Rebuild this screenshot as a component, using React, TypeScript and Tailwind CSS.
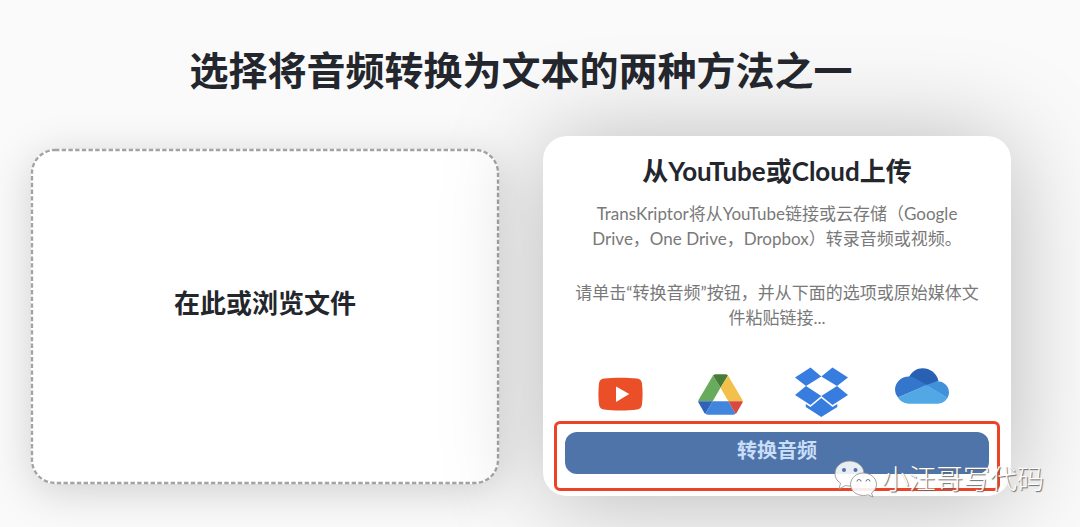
import React from 'react';

const YouTubeLogo: React.FC = () => (
  <svg viewBox="0 0 45 34" className="w-[45px] h-[34px] mt-[10px]" role="img" aria-label="YouTube">
    <path
      d="M6 1.6C16 .3 29 .3 39 1.6c3 .4 4.6 2 5 5 .8 6.800.8 14 0 20.800-.4 3-2 4.600-5 5-10 1.300-23 1.300-33 0-3-.4-4.600-2-5-5C.2 20.600.2 13.400 1 6.600c.4-3 2-4.600 5-5Z"
      fill="#ea4f27"
    />
    <path d="M18 9.500 31.300 17 18 25Z" fill="#fff" />
  </svg>
);

const DriveLogo: React.FC = () => (
  <svg viewBox="0 0 45 41" className="w-[45px] h-[41px] mt-[7px]" role="img" aria-label="Google Drive">
    <path d="M15 1.500 .8 25.500Q0 27 .3 27.300H14.700L22.500 13.800Z" fill="#68ab5c" />
    <path d="M15 1.500Q16 .3 18 .3H27Q29 .3 30 1.500L22.500 13.800Z" fill="#477b38" />
    <path d="M30 1.500 44.200 25.500Q45 27 44.700 27.300H30.300L22.500 13.800Z" fill="#f2c14b" />
    <path d="M.3 27.300H14.700L7.400 39.700Q6.500 39.200 6 38.200L1 29.500Q.3 28.500 .3 27.300Z" fill="#2f62bb" />
    <path d="M14.700 27.300H30.300L37.600 39.700Q36.500 40.700 34.500 40.700H10.500Q8.500 40.700 7.400 39.700Z" fill="#4285dd" />
    <path d="M30.300 27.300H44.700Q44.700 28.500 44 29.500L39 38.200Q38.500 39.200 37.600 39.700Z" fill="#d84a3f" />
  </svg>
);

const DropboxLogo: React.FC = () => (
  <svg viewBox="0 0 53 50" className="w-[53px] h-[50px]" role="img" aria-label="Dropbox">
    <g fill="#377de0">
      <path d="M15.500 .5 26.300 9.400 11 19 0 10.500Z" />
      <path d="M37.500 .5 53 10.500 42 19 26.300 9.400Z" />
      <path d="M11 19 26.300 29 15.500 38 0 28Z" />
      <path d="M42 19 53 28 37.500 38 26.300 29Z" />
      <path d="M26.300 31 37.500 40 42.300 37V40L26.300 50 10.800 40V37L15.500 40Z" />
    </g>
  </svg>
);

const OneDriveLogo: React.FC = () => (
  <svg viewBox="0 0 54 36" className="w-[54px] h-[36px] mt-px" role="img" aria-label="OneDrive">
    <path d="M14 9C17 3.500 22 .3 27.500 .3 35 .3 41.500 5 43.500 13L32 18Z" fill="#2861b4" />
    <path d="M14 8.500Q17.500 8.500 20.500 10.500L32 17 3 29.500Q0 26 0 22C0 14.500 6 8.500 14 8.500Z" fill="#3576cd" />
    <path d="M31 17 42 13.200C48.500 13 54 18 54 24.500Q54 27.500 52.500 30Z" fill="#4190da" />
    <path d="M31.500 17 52.500 29.500C50.500 33.500 47 35.700 42.500 35.700H14C9.500 35.700 5.500 33.500 3 29.500Z" fill="#51a8e4" />
  </svg>
);

const WeChatIcon: React.FC = () => (
  <svg viewBox="0 0 44 38" className="w-[44px] h-[38px]" aria-hidden="true">
    <g stroke="#8a8a8a" strokeWidth="0.800">
      <path
        d="M15.500 1C7.500 1 1 6.500 1 13.500c0 4 2 7.500 5.500 9.700L5 29l6.500-3.500c1.300.3 2.700.5 4 .5 8 0 14.500-5.500 14.500-12.500S23.500 1 15.500 1Z"
        fill="#fff"
        fillOpacity="0.880"
      />
      <path
        d="M29.500 13C22.500 13 16.500 18 16.500 24.500S22.500 35.500 29.500 35.500c1.500 0 3-.2 4.500-.7l5 2.200-1.500-4C40.500 31 42.500 28 42.500 24.500 42.500 18 36.500 13 29.500 13Z"
        fill="#fff"
        fillOpacity="0.900"
      />
    </g>
    <circle cx="10" cy="10" r="2" fill="#4f74a9" />
    <circle cx="21.500" cy="10" r="2" fill="#4f74a9" />
    <path d="M23 21.500a2 2 0 0 1 4 0M32 21.500a2 2 0 0 1 4 0" fill="none" stroke="#777" />
  </svg>
);

// CSS dashed borders don't let us pick the dash length, so the outline is drawn
const DashedOutline: React.FC = () => (
  <svg className="absolute inset-0 w-full h-full p-px overflow-visible" aria-hidden="true">
    <rect
      width="100%"
      height="100%"
      rx="23"
      fill="none"
      stroke="#a3a3a3"
      strokeWidth="2.300"
      strokeDasharray="4.400 2.300"
    />
  </svg>
);

const UploadCard: React.FC = () => (
  <label
    htmlFor="audio-file"
    className="relative flex items-center justify-center h-[335px] pb-[26px] bg-white rounded-3xl cursor-pointer shadow-[0_8px_44px_rgba(0,0,0,0.17)]"
  >
    <DashedOutline />
    <span className="text-[26px] leading-8 font-bold">在此或浏览文件</span>
    <input id="audio-file" type="file" accept="audio/*,video/*" className="sr-only" />
  </label>
);

// relative keeps this card's wide shadow on top of the upload card
const CloudCard: React.FC = () => (
  <section className="relative bg-white rounded-3xl pt-[19px] px-[11px] pb-[5px] text-center shadow-[0_4px_100px_rgba(0,0,0,0.27)]">
    <h2 className="text-[26px] leading-8 font-bold">从YouTube或Cloud上传</h2>
    <div className="px-5 text-[17px] leading-[25px] text-[#797979]">
      <p className="mt-[14px]">
        TransKriptor将从YouTube链接或云存储（Google
        <br />
        Drive，One Drive，Dropbox）转录音频或视频。
      </p>
      <p className="mt-[29px]">请单击“转换音频”按钮，并从下面的选项或原始媒体文件粘贴链接...</p>
    </div>
    <div className="mt-[37px] grid grid-cols-4 justify-items-center pl-4 pr-7">
      <YouTubeLogo />
      <DriveLogo />
      <DropboxLogo />
      <OneDriveLogo />
    </div>
    <div className="mt-1 border-[3px] border-[#ec4226] rounded-md px-2 pt-2 pb-[14px]">
      <button
        type="button"
        className="block w-full h-[42px] pb-[6px] rounded-xl bg-[#4f74a9] text-[#c8def8] text-xl leading-7 font-bold"
      >
        转换音频
      </button>
    </div>
  </section>
);

const App: React.FC = () => {
  return (
    <main className="relative overflow-hidden bg-[#fafafa] text-[#23262c] pt-[46px] pb-[31px] pl-[31px] pr-[69px] font-['Lato','Noto_Sans_CJK_SC',sans-serif]">
      <h1 className="relative z-10 text-[39px] leading-[48px] font-bold text-center mb-[42px]">
        选择将音频转换为文本的两种方法之一
      </h1>
      <div className="grid grid-cols-2 items-center gap-11">
        <UploadCard />
        <CloudCard />
      </div>
      <div className="absolute right-9 bottom-7 flex items-center gap-1">
        <WeChatIcon />
        <span className="text-[27px] leading-10 font-light text-white [text-shadow:1px_1px_1px_#666]">
          小汪哥写代码
        </span>
      </div>
    </main>
  );
};

export default App;
